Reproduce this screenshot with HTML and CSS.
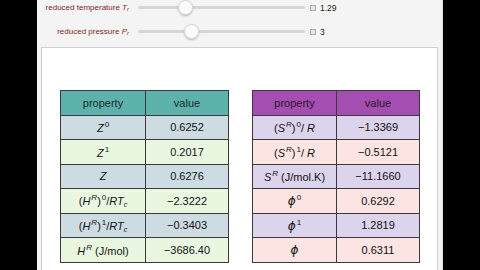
FILE: index.html
```html
<!DOCTYPE html>
<html>
<head>
<meta charset="utf-8">
<link rel="stylesheet" href="styles.css">
</head>
<body>
<div class="frame">
  <div class="side"></div>
  <div class="panel">
    <div class="controls">
      <div class="ctl">
        <div class="label">reduced temperature <i>T<sub>r</sub></i></div>
        <div class="slider"><div class="track"></div><div class="thumb t1"></div></div>
        <div class="box"></div>
        <div class="val">1.29</div>
      </div>
      <div class="ctl">
        <div class="label">reduced pressure <i>P<sub>r</sub></i></div>
        <div class="slider"><div class="track"></div><div class="thumb t2"></div></div>
        <div class="box"></div>
        <div class="val">3</div>
      </div>
    </div>
    <div class="output">
      <table class="tbl teal">
        <tr><th>property</th><th>value</th></tr>
        <tr class="a"><td><i>Z</i><sup>0</sup></td><td>0.6252</td></tr>
        <tr class="b"><td><i>Z</i><sup>1</sup></td><td>0.2017</td></tr>
        <tr class="a"><td><i>Z</i></td><td>0.6276</td></tr>
        <tr class="b"><td>(<i>H</i><sup><i>R</i></sup>)<sup>0</sup>/<i>RT</i><sub><i>c</i></sub></td><td>&minus;2.3222</td></tr>
        <tr class="a"><td>(<i>H</i><sup><i>R</i></sup>)<sup>1</sup>/<i>RT</i><sub><i>c</i></sub></td><td>&minus;0.3403</td></tr>
        <tr class="b"><td><i>H</i><sup><i>R</i></sup> (J/mol)</td><td>&minus;3686.40</td></tr>
      </table>
      <table class="tbl purple">
        <tr><th>property</th><th>value</th></tr>
        <tr class="a"><td>(<i>S</i><sup><i>R</i></sup>)<sup>0</sup>/ <i>R</i></td><td>&minus;1.3369</td></tr>
        <tr class="b"><td>(<i>S</i><sup><i>R</i></sup>)<sup>1</sup>/ <i>R</i></td><td>&minus;0.5121</td></tr>
        <tr class="a"><td><i>S</i><sup><i>R</i></sup> (J/mol.K)</td><td>&minus;11.1660</td></tr>
        <tr class="b"><td><i class="phi">&#981;</i><sup>0</sup></td><td>0.6292</td></tr>
        <tr class="a"><td><i class="phi">&#981;</i><sup>1</sup></td><td>1.2819</td></tr>
        <tr class="b"><td><i class="phi">&#981;</i></td><td>0.6311</td></tr>
      </table>
    </div>
  </div>
  <div class="side"></div>
</div>
</body>
</html>
```
FILE: styles.css
```css
html, body {
  margin: 0;
  padding: 0;
  background: #000;
  width: 480px;
  height: 270px;
  overflow: hidden;
  font-family: "Liberation Sans", Arial, sans-serif;
}
.frame {
  display: flex;
  height: 270px;
}
.side {
  flex: 1;
  background: #000;
}
.panel {
  width: 405px;
  flex: none;
  background: #f4f4f4;
  border-right: 1px solid #e0e0e0;
  display: flex;
  flex-direction: column;
}
.controls {
  display: flex;
  flex-direction: column;
  gap: 11px;
  padding-top: 1px;
  height: 47px;
  box-sizing: border-box;
}
.ctl {
  display: flex;
  align-items: center;
  height: 13px;
}
.label {
  width: 92px;
  text-align: right;
  font-size: 8px;
  color: #7e2626;
  white-space: nowrap;
}
.label i {
  font-style: italic;
}
.label sub {
  font-size: 6px;
  vertical-align: -1px;
}
.slider {
  position: relative;
  width: 167px;
  height: 13px;
  margin-left: 9px;
}
.track {
  position: absolute;
  left: 0;
  right: 0;
  top: 5px;
  height: 3px;
  background: #d6d6d6;
  border-radius: 2px;
}
.thumb {
  position: absolute;
  top: -1px;
  width: 13px;
  height: 13px;
  border-radius: 50%;
  background: #fbfbfb;
  border: 1px solid #d8d8d8;
  box-shadow: 0 1px 2px rgba(0,0,0,0.25);
}
.t1 { left: 40px; }
.t2 { left: 46px; }
.box {
  width: 4px;
  height: 4px;
  border: 1px solid #aaa;
  background: #e8e8e8;
  margin-left: 5px;
}
.val {
  margin-left: 4px;
  font-size: 8.5px;
  color: #222;
}
.output {
  margin-left: 4px;
  margin-right: 4px;
  flex: 1;
  background: #fff;
  border: 1px solid #cfcfcf;
  border-bottom: none;
  display: flex;
  gap: 23px;
  padding: 42px 0 0 18px;
  align-items: flex-start;
}
.tbl {
  border-collapse: collapse;
  font-size: 11px;
  color: #111;
}
.tbl td, .tbl th {
  border: 1px solid #3a3a3a;
  height: 23.5px;
  padding: 0;
  text-align: center;
  font-weight: normal;
  white-space: nowrap;
}
.teal td:first-child, .teal th:first-child { width: 84px; }
.teal td:last-child, .teal th:last-child { width: 82px; }
.purple td:first-child, .purple th:first-child { width: 83px; }
.purple td:last-child, .purple th:last-child { width: 82px; }
.tbl sup {
  font-size: 8px;
  vertical-align: 5px;
  margin-left: 1px;
}
.tbl sub {
  font-size: 7px;
  vertical-align: -2px;
}
.phi {
  font-family: "DejaVu Sans", sans-serif;
  font-size: 12px;
}
.teal th { background: #5db3ac; color: #1c2a2a; }
.teal .a td { background: #cddbe3; }
.teal .b td { background: #e9f7e1; }
.purple th { background: #a54eb2; color: #2a1430; }
.purple .a td { background: #dcd3ec; }
.purple .b td { background: #fbe4e1; }
```
